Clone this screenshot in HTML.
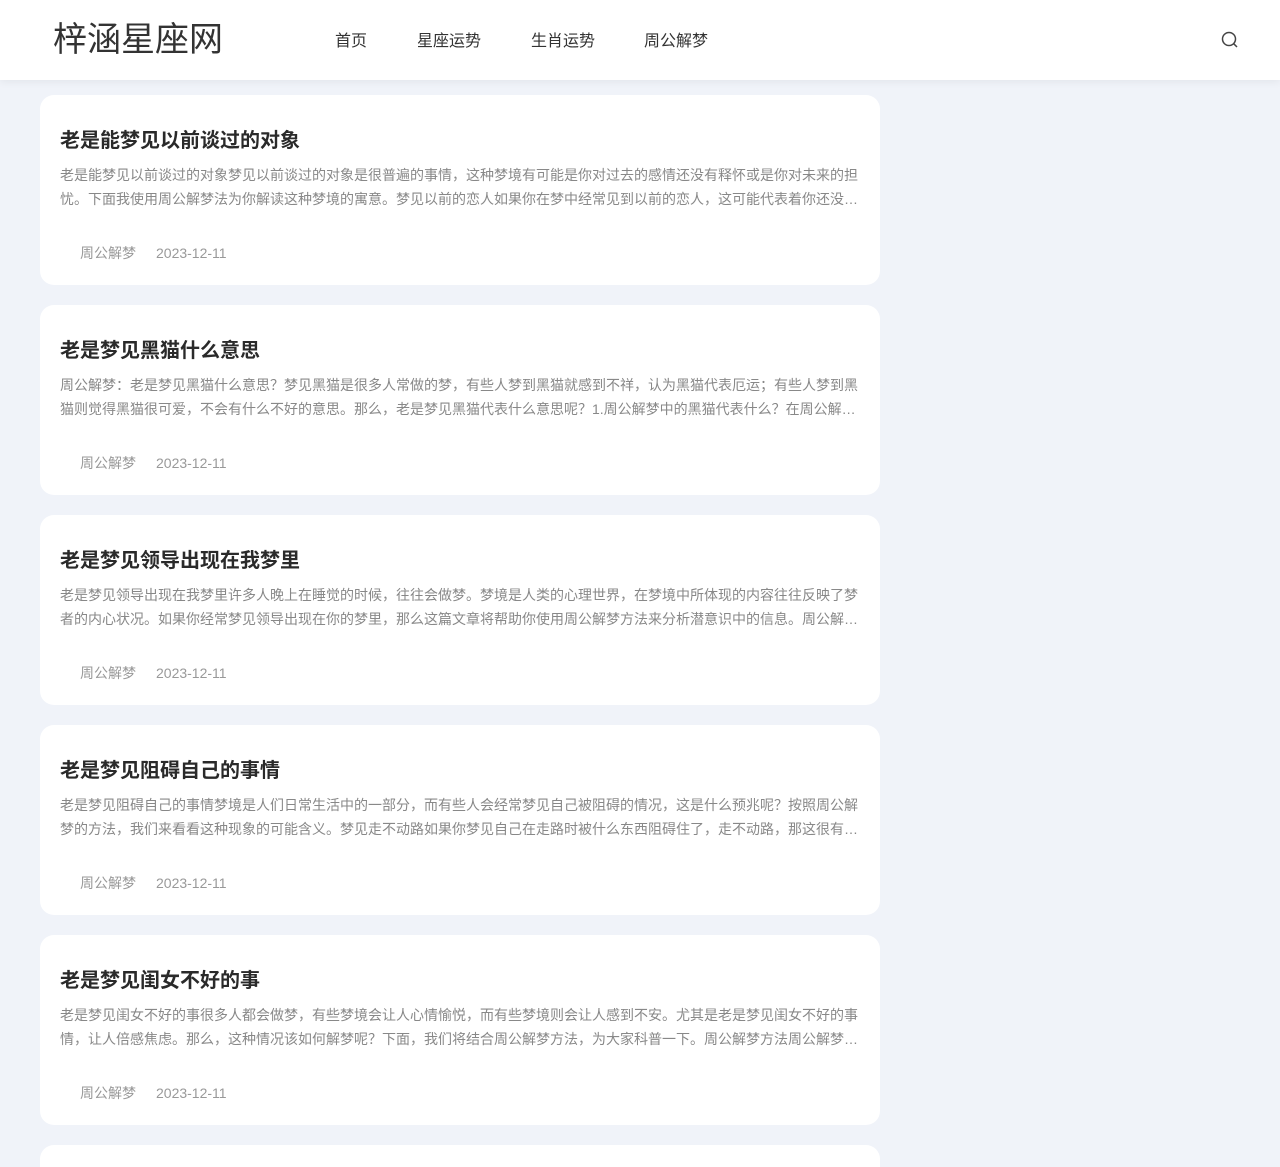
<!DOCTYPE html>
<html style="height:1167px;overflow:hidden"><head><meta charset="utf-8"><style>
*{margin:0;padding:0;box-sizing:border-box}
body{position:relative;width:1280px;height:1167px;overflow:hidden;background:#f0f3f9;font-family:"Liberation Sans","Noto Sans CJK SC",sans-serif}
.hd{position:absolute;left:0;top:0;width:1280px;height:80px;background:#fff;box-shadow:0 2px 8px rgba(0,0,0,.06);z-index:2}
.logo{position:absolute;left:53px;top:19px;font-size:34px;line-height:42px;color:#333}
.nav a{position:absolute;top:31px;font-size:16px;line-height:22px;color:#333;text-decoration:none}
.srch{position:absolute;left:1220px;top:30px}
.card{position:absolute;left:40px;width:840px;height:190px;background:#fff;border-radius:14px}
.t{position:absolute;left:20px;top:32px;font-size:20px;font-weight:bold;color:#2a2a2a;line-height:28px}
.p{position:absolute;left:20px;top:68px;width:800px;font-size:14px;line-height:24px;color:#888;height:48px;overflow:hidden}
.m{position:absolute;left:40px;top:148px;font-size:14px;line-height:20px;color:#999}
.m span{margin-right:20px}
</style></head><body>
<div class="hd">
<div class="logo">梓涵星座网</div>
<div class="nav"><a style="left:335px">首页</a><a style="left:417px">星座运势</a><a style="left:531px">生肖运势</a><a style="left:644px">周公解梦</a></div>
<svg class="srch" width="20" height="20" viewBox="0 0 20 20"><circle cx="9" cy="9" r="6.5" fill="none" stroke="#444" stroke-width="1.5"/><line x1="13.8" y1="13.8" x2="17" y2="17" stroke="#444" stroke-width="1.5"/></svg>
</div>

<div class="card" style="top:95px"><div class="t">老是能梦见以前谈过的对象</div><div class="p">老是能梦见以前谈过的对象梦见以前谈过的对象是很普遍的事情，这种梦境有可能是你对过去的感情还没有释怀或是你对未来的担忧。下面我使用周公解梦法为你解读这种梦境的寓意。梦见以前的恋人如果你在梦中经常见到以前的恋人，这可能代表着你还没…</div><div class="m"><span>周公解梦</span>2023-12-11</div></div>

<div class="card" style="top:305px"><div class="t">老是梦见黑猫什么意思</div><div class="p">周公解梦：老是梦见黑猫什么意思？梦见黑猫是很多人常做的梦，有些人梦到黑猫就感到不祥，认为黑猫代表厄运；有些人梦到黑猫则觉得黑猫很可爱，不会有什么不好的意思。那么，老是梦见黑猫代表什么意思呢？1.周公解梦中的黑猫代表什么？在周公解…</div><div class="m"><span>周公解梦</span>2023-12-11</div></div>

<div class="card" style="top:515px"><div class="t">老是梦见领导出现在我梦里</div><div class="p">老是梦见领导出现在我梦里许多人晚上在睡觉的时候，往往会做梦。梦境是人类的心理世界，在梦境中所体现的内容往往反映了梦者的内心状况。如果你经常梦见领导出现在你的梦里，那么这篇文章将帮助你使用周公解梦方法来分析潜意识中的信息。周公解…</div><div class="m"><span>周公解梦</span>2023-12-11</div></div>

<div class="card" style="top:725px"><div class="t">老是梦见阻碍自己的事情</div><div class="p">老是梦见阻碍自己的事情梦境是人们日常生活中的一部分，而有些人会经常梦见自己被阻碍的情况，这是什么预兆呢？按照周公解梦的方法，我们来看看这种现象的可能含义。梦见走不动路如果你梦见自己在走路时被什么东西阻碍住了，走不动路，那这很有…</div><div class="m"><span>周公解梦</span>2023-12-11</div></div>

<div class="card" style="top:935px"><div class="t">老是梦见闺女不好的事</div><div class="p">老是梦见闺女不好的事很多人都会做梦，有些梦境会让人心情愉悦，而有些梦境则会让人感到不安。尤其是老是梦见闺女不好的事情，让人倍感焦虑。那么，这种情况该如何解梦呢？下面，我们将结合周公解梦方法，为大家科普一下。周公解梦方法周公解梦…</div><div class="m"><span>周公解梦</span>2023-12-11</div></div>

<div class="card" style="top:1145px;height:22px;border-radius:14px 14px 0 0"></div>
</body></html>
